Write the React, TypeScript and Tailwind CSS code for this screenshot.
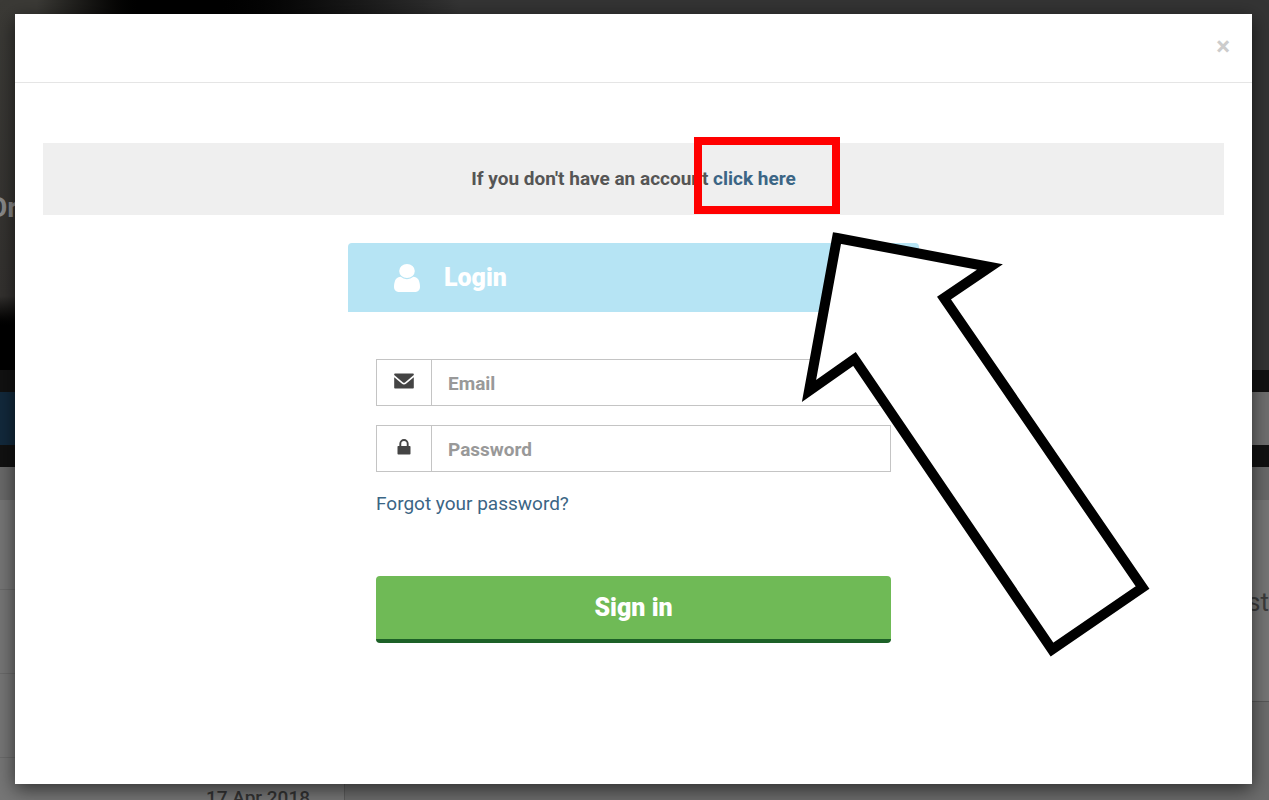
import { FormEvent, ReactNode } from "react";

function UserIcon() {
    return (
        <svg
            aria-hidden="true"
            viewBox="256 128 1280 1536"
            preserveAspectRatio="none"
            fill="currentColor"
            className="h-7 w-[26px]"
        >
            <path d="M1536 1399q0 109-62.5 187t-150.5 78h-854q-88 0-150.5-78t-62.5-187q0-85 8.5-160.5t31.5-152 58.5-131 94-89 134.5-34.5q131 128 313 128t313-128q76 0 134.5 34.5t94 89 58.5 131 31.5 152 8.5 160.5zm-256-887q0 159-112.5 271.5t-271.5 112.5-271.5-112.5-112.5-271.5 112.5-271.5 271.5-112.5 271.5 112.5 112.5 271.5z" />
        </svg>
    );
}

function EnvelopeIcon() {
    return (
        <svg
            aria-hidden="true"
            viewBox="0 0 20 16"
            fill="currentColor"
            className="h-4 w-5"
        >
            <path d="M1 0.5h18q.8 0 .8.8v.7L11.3 9.2q-1.3 1-2.6 0L.2 2v-.7Q.2.500 1 .5Z" />
            <path d="M.2 4.200 7.700 10.500q2.300 1.800 4.600 0L19.800 4.200V14.700q0 .8-.8.8H1q-.8 0-.8-.8Z" />
        </svg>
    );
}

function LockIcon() {
    return (
        <svg
            aria-hidden="true"
            viewBox="0 0 14 16"
            className="h-4 w-3.5"
        >
            <path
                d="M3.300 8V4.700a3.700 3.700 0 0 1 7.400 0V8"
                fill="none"
                stroke="currentColor"
                strokeWidth="1.900"
            />
            <rect x="0.500" y="7" width="13" height="8.600" rx="0.800" fill="currentColor" />
        </svg>
    );
}

function PageBehind() {
    return (
        <div
            aria-hidden="true"
            className="absolute inset-0 flex flex-col overflow-hidden bg-[#6c6c6c]"
        >
            <div className="flex h-[370px] shrink-0 items-center bg-[#343434]">
                <div className="flex h-full w-[460px] items-center bg-linear-to-r from-[#3b3a36] from-8% via-black via-35% to-[#343434]">
                    <div className="flex h-full w-[15px] flex-col bg-linear-to-b from-[#3b3a36] from-0% via-[#33312f] via-80% to-black to-90% pt-[190px]">
                        <span className="-ml-3 text-[28px] leading-9 font-bold text-[#8a8a8a]">
                            Or
                        </span>
                    </div>
                </div>
            </div>
            <div className="flex h-[97px] shrink-0 bg-[#111111] py-[22px]">
                <div className="w-[200px] bg-[#12293c]" />
                <div className="flex-1 bg-[#6f6f6f]" />
            </div>
            <div className="h-[33px] shrink-0 bg-[#696969]" />
            <div className="flex flex-1">
                <div className="flex w-[345px] shrink-0 flex-col border-r border-[#5c5c5c] bg-[#767676]">
                    <div className="h-[90px] border-b border-[#6a6a6a]" />
                    <div className="h-[84px] border-b border-[#6a6a6a]" />
                    <div className="h-[84px] border-b border-[#6a6a6a]" />
                    <div className="pt-[28px] pr-[34px] text-right text-[19px] leading-6 font-medium whitespace-nowrap text-[#333333]">
                        17 Apr 2018
                    </div>
                </div>
                <div className="flex-1 bg-[#6c6c6c]">
                    <div className="flex h-[202px] items-center justify-end border-b border-[#585858] bg-[#767676] pt-1 text-[26px] text-[#3c3c3c]">
                        st
                    </div>
                </div>
            </div>
        </div>
    );
}

function PointerArrow() {
    return (
        <svg
            aria-hidden="true"
            viewBox="802 232 349 426"
            className="pointer-events-none absolute -top-[11px] left-[454px] h-[426px] w-[349px] overflow-visible"
        >
            <path
                d="M837 238 990 267 944 298 1142.500 587.500 1052 649.500 854.500 359 809 391Z"
                fill="#fff"
                stroke="#000"
                strokeWidth="10"
                strokeMiterlimit="10"
            />
        </svg>
    );
}

type FieldProps = {
    id: string;
    type: string;
    label: string;
    icon: ReactNode;
};

function Field({ id, type, label, icon }: FieldProps) {
    return (
        <div className="flex h-[47px] border border-[#c4c4c4]">
            <label
                htmlFor={id}
                aria-label={label}
                className="flex w-[55px] shrink-0 items-center justify-center border-r border-[#c4c4c4] pb-1 text-[#444444]"
            >
                {icon}
            </label>
            <input
                id={id}
                type={type}
                placeholder={label}
                className="w-full min-w-0 px-4 pt-1 text-[19px] font-bold text-[#555555] outline-none placeholder:text-[#999999]"
            />
        </div>
    );
}

export default function App() {
    function submit(e: FormEvent) {
        e.preventDefault();
    }

    return (
        <div className="relative min-h-screen overflow-hidden pt-[14px] pr-[17px] pb-[17px] pl-[15px] font-['Roboto','Liberation_Sans',sans-serif]">
            <PageBehind />
            <div
                role="dialog"
                aria-label="Login"
                className="relative bg-white pb-[141px] shadow-[0_5px_18px_rgba(0,0,0,0.6)]"
            >
                <div className="flex h-[69px] items-center justify-end border-b border-[#e5e5e5] px-[22px] pb-1">
                    <button
                        type="button"
                        aria-label="Close"
                        className="text-[26px] leading-8 font-bold text-[#cccccc]"
                    >
                        ×
                    </button>
                </div>

                <div className="mx-7 mt-[60px] flex h-[72px] items-center justify-center bg-[#efefef] text-[19px] font-bold text-[#555555]">
                    <p>
                        If you don't have an account{" "}
                        <span className="relative">
                            <a href="#" className="text-[#3b6585]">
                                click here
                            </a>
                            <span className="pointer-events-none absolute -top-[30px] -left-[19px] h-[77px] w-[146px] border-8 border-[#ff0000]" />
                        </span>
                    </p>
                </div>

                <div className="relative mx-auto mt-7 w-[571px]">
                    <h2 className="flex h-[69px] items-center gap-6 rounded-t bg-[#b6e4f4] pl-[46px] text-[25px] font-black text-white">
                        <UserIcon />
                        Login
                    </h2>
                    <form onSubmit={submit} className="px-7 pt-[47px]">
                        <div className="flex flex-col gap-[19px]">
                            <Field
                                id="email"
                                type="email"
                                label="Email"
                                icon={<EnvelopeIcon />}
                            />
                            <Field
                                id="password"
                                type="password"
                                label="Password"
                                icon={<LockIcon />}
                            />
                        </div>
                        <a
                            href="#"
                            className="mt-5 block w-fit text-[19px] leading-6 text-[#3b6585]"
                        >
                            Forgot your password?
                        </a>
                        <button
                            type="submit"
                            className="mt-[60px] block h-[67px] w-full rounded border-b-4 border-[#1d6127] bg-[#6fba56] text-[25px] font-black text-white"
                        >
                            Sign in
                        </button>
                    </form>
                    <PointerArrow />
                </div>
            </div>
        </div>
    );
}
